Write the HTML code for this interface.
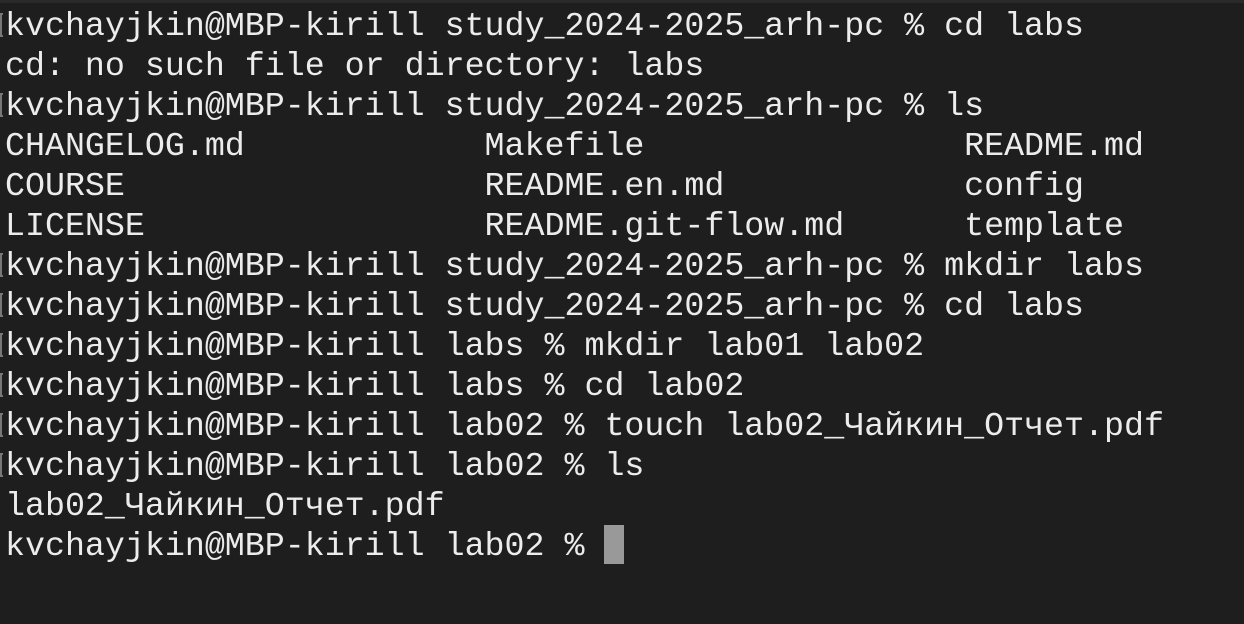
<!DOCTYPE html><html><head><style>
html,body{margin:0;width:1244px;height:624px;background:#1e1e1e;overflow:hidden}
.t{position:absolute;left:5px;top:6px;font-family:"Liberation Mono","DejaVu Sans Mono",monospace;font-size:33.3px;line-height:40px;color:#ececec;white-space:pre}
.b{position:absolute;left:0;width:3px;height:24px;border:2px solid #777;border-right:none;box-sizing:border-box}
.c{position:absolute;left:604px;top:525px;width:20px;height:39px;background:#999}
.top{position:absolute;left:0;top:0;width:1244px;height:3px;background:#2a2a2a}
</style></head><body>
<div class="top"></div>
<div class="b" style="top:13px"></div><div class="b" style="top:93px"></div><div class="b" style="top:253px"></div><div class="b" style="top:293px"></div><div class="b" style="top:333px"></div><div class="b" style="top:373px"></div><div class="b" style="top:413px"></div><div class="b" style="top:453px"></div>
<div class="t">kvchayjkin@MBP-kirill study_2024-2025_arh-pc % cd labs
cd: no such file or directory: labs
kvchayjkin@MBP-kirill study_2024-2025_arh-pc % ls
CHANGELOG.md            Makefile                README.md
COURSE                  README.en.md            config
LICENSE                 README.git-flow.md      template
kvchayjkin@MBP-kirill study_2024-2025_arh-pc % mkdir labs
kvchayjkin@MBP-kirill study_2024-2025_arh-pc % cd labs
kvchayjkin@MBP-kirill labs % mkdir lab01 lab02
kvchayjkin@MBP-kirill labs % cd lab02
kvchayjkin@MBP-kirill lab02 % touch lab02_Чайкин_Отчет.pdf
kvchayjkin@MBP-kirill lab02 % ls
lab02_Чайкин_Отчет.pdf
kvchayjkin@MBP-kirill lab02 % </div>
<div class="c"></div>
</body></html>
